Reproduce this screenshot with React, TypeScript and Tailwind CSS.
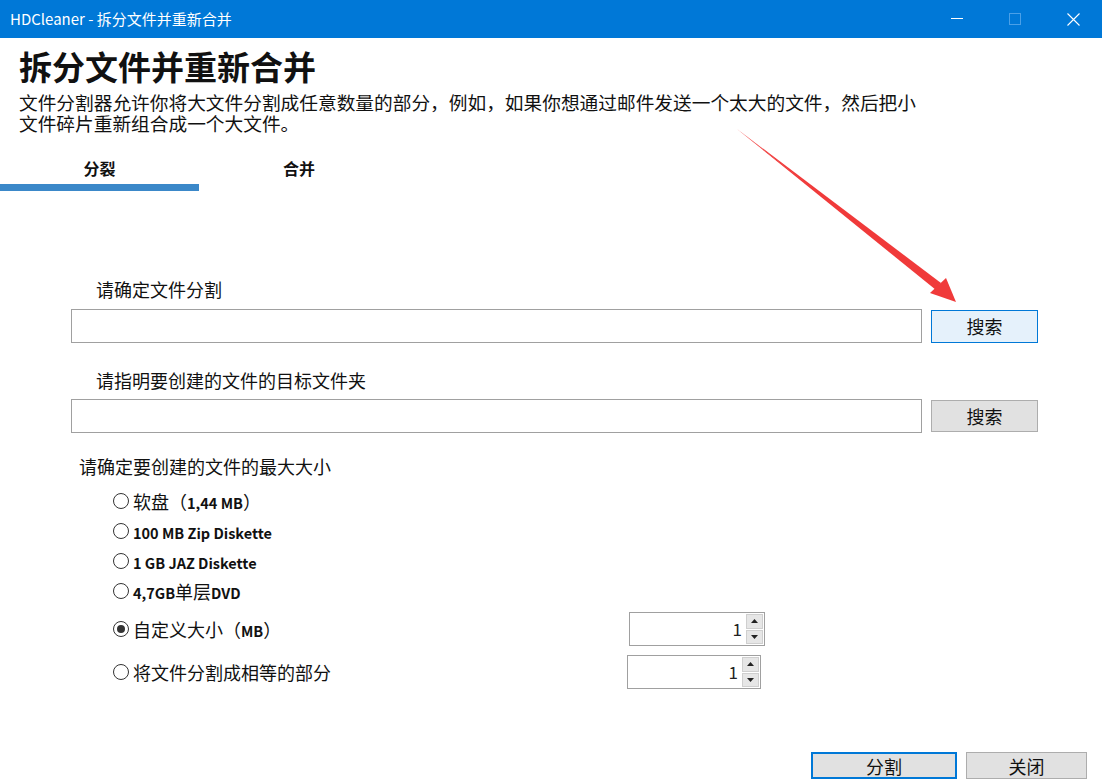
import React from "react";

const font = { fontFamily: '"Noto Sans CJK SC", "Noto Sans", sans-serif' };

type Option = { id: string; label: React.ReactNode };

const options: Option[] = [
  { id: "floppy", label: <>软盘（<span className="text-[14.5px] font-semibold">1,44 MB</span>）</> },
  { id: "zip", label: <span className="text-[14.5px] font-semibold">100 MB Zip Diskette</span> },
  { id: "jaz", label: <span className="text-[14.5px] font-semibold">1 GB JAZ Diskette</span> },
  { id: "dvd", label: <><span className="text-[14.5px] font-semibold">4,7GB</span>单层<span className="text-[14.5px] font-semibold">DVD</span></> },
];

function Radio({ checked }: { checked?: boolean }) {
  return (
    <span className="w-[16px] h-[16px] rounded-full border border-[#333] flex items-center justify-center bg-white shrink-0">
      {checked && <span className="w-[8px] h-[8px] rounded-full bg-[#333]" />}
    </span>
  );
}

function SpinBox({ className }: { className: string }) {
  return (
    <div className={`flex h-[34px] border border-[#a0a0a0] bg-white ${className}`}>
      <div className="flex-1 flex items-center justify-end pr-[4px] text-[17px] text-[#222]">1</div>
      <div className="w-[18px] flex flex-col gap-[1px] py-[1px] pr-[1px]">
        <div className="flex-1 bg-[#e6e6e6] border border-[#cfcfcf] flex items-center justify-center">
          <svg width="7" height="4" viewBox="0 0 7 4"><path d="M0 4 L3.5 0 L7 4 Z" fill="#222" /></svg>
        </div>
        <div className="flex-1 bg-[#e6e6e6] border border-[#cfcfcf] flex items-center justify-center">
          <svg width="7" height="4" viewBox="0 0 7 4"><path d="M0 0 L3.5 4 L7 0 Z" fill="#222" /></svg>
        </div>
      </div>
    </div>
  );
}

export default function App() {
  return (
    <div className="w-[1102px] h-[781px] bg-white relative overflow-hidden text-[#111]" style={font}>
      {/* title bar */}
      <div className="h-[38px] bg-[#0078d7] flex items-center justify-between text-white">
        <span className="pl-[10px] text-[15px]">HDCleaner - 拆分文件并重新合并</span>
        <div className="flex h-full">
          <div className="w-[58px] flex items-center justify-center">
            <svg width="12" height="2" viewBox="0 0 12 2"><rect width="12" height="1" fill="#fff" /></svg>
          </div>
          <div className="w-[58px] flex items-center justify-center">
            <svg width="12" height="12" viewBox="0 0 12 12"><rect x="0.5" y="0.5" width="11" height="11" fill="none" stroke="#4aa0e8" /></svg>
          </div>
          <div className="w-[58px] flex items-center justify-center">
            <svg width="13" height="13" viewBox="0 0 13 13"><path d="M0.5 0.5 L12.5 12.5 M12.5 0.5 L0.5 12.5" stroke="#fff" strokeWidth="1.1" /></svg>
          </div>
        </div>
      </div>

      {/* heading */}
      <div className="pl-[19px] pt-[8px]">
        <h1 className="text-[33px] leading-[40px] font-bold">拆分文件并重新合并</h1>
        <p className="mt-[5px] text-[18.7px] leading-[21px] whitespace-nowrap">
          文件分割器允许你将大文件分割成任意数量的部分，例如，如果你想通过邮件发送一个太大的文件，然后把小
          <br />
          文件碎片重新组合成一个大文件。
        </p>
      </div>

      {/* tabs */}
      <div className="flex mt-[18px]">
        <div className="w-[199px] flex flex-col">
          <div className="h-[33px] flex items-center justify-center text-[16px] font-bold">分裂</div>
          <div className="h-[7px] bg-[#3b88c9]" />
        </div>
        <div className="w-[200px] h-[33px] flex items-center justify-center text-[16px] font-bold">合并</div>
      </div>

      {/* form */}
      <div className="pl-[71px] pr-[64px] mt-[86px]">
        <div className="pl-[25px] text-[18px] leading-[24px]">请确定文件分割</div>
        <div className="flex items-center gap-[9px] mt-[8px]">
          <div className="flex-1 h-[34px] border border-[#a0a0a0] bg-white" />
          <button className="w-[107px] h-[33px] bg-[#e5f1fb] border border-[#0078d7] text-[18px]">搜索</button>
        </div>
        <div className="pl-[25px] mt-[25px] text-[18px] leading-[24px]">请指明要创建的文件的目标文件夹</div>
        <div className="flex items-center gap-[9px] mt-[7px]">
          <div className="flex-1 h-[34px] border border-[#a0a0a0] bg-white" />
          <button className="w-[107px] h-[32px] bg-[#e1e1e1] border border-[#adadad] text-[18px]">搜索</button>
        </div>
        <div className="pl-[8px] mt-[21px] text-[18px] leading-[24px]">请确定要创建的文件的最大大小</div>
      </div>

      <div className="pl-[113px] mt-[8px] flex flex-col">
        {options.map((o) => (
          <div key={o.id} className="h-[30px] flex items-center gap-[4px] text-[18px]">
            <Radio />
            <span>{o.label}</span>
          </div>
        ))}
        <div className="flex items-center mt-[6px] h-[34px]">
          <div className="w-[516px] flex items-center gap-[4px] text-[18px]">
            <Radio checked />
            <span>自定义大小（<span className="text-[14.5px] font-semibold">MB</span>）</span>
          </div>
          <SpinBox className="w-[136px]" />
        </div>
        <div className="flex items-center mt-[9px] h-[34px]">
          <div className="w-[514px] flex items-center gap-[4px] text-[18px]">
            <Radio />
            <span>将文件分割成相等的部分</span>
          </div>
          <SpinBox className="w-[134px]" />
        </div>
      </div>

      {/* footer buttons */}
      <div className="absolute left-[811px] bottom-[2px] flex gap-[9px]">
        <button className="w-[146px] h-[27px] bg-[#e1e1e1] border-2 border-[#0078d7] text-[18px] leading-none">分割</button>
        <button className="w-[121px] h-[27px] bg-[#e1e1e1] border border-[#adadad] text-[18px] leading-none">关闭</button>
      </div>

      {/* annotation arrow */}
      <svg className="absolute left-0 top-0 pointer-events-none" width="1102" height="781" viewBox="0 0 1102 781">
        <path d="M737 129 L938 287 L941 283 Z" fill="#f03a3a" />
        <path d="M737 129 L936 290 L939 286 Z" fill="#f03a3a" />
        <path d="M956 302 L930 293 L946 278 Z" fill="#f03a3a" />
      </svg>
    </div>
  );
}
